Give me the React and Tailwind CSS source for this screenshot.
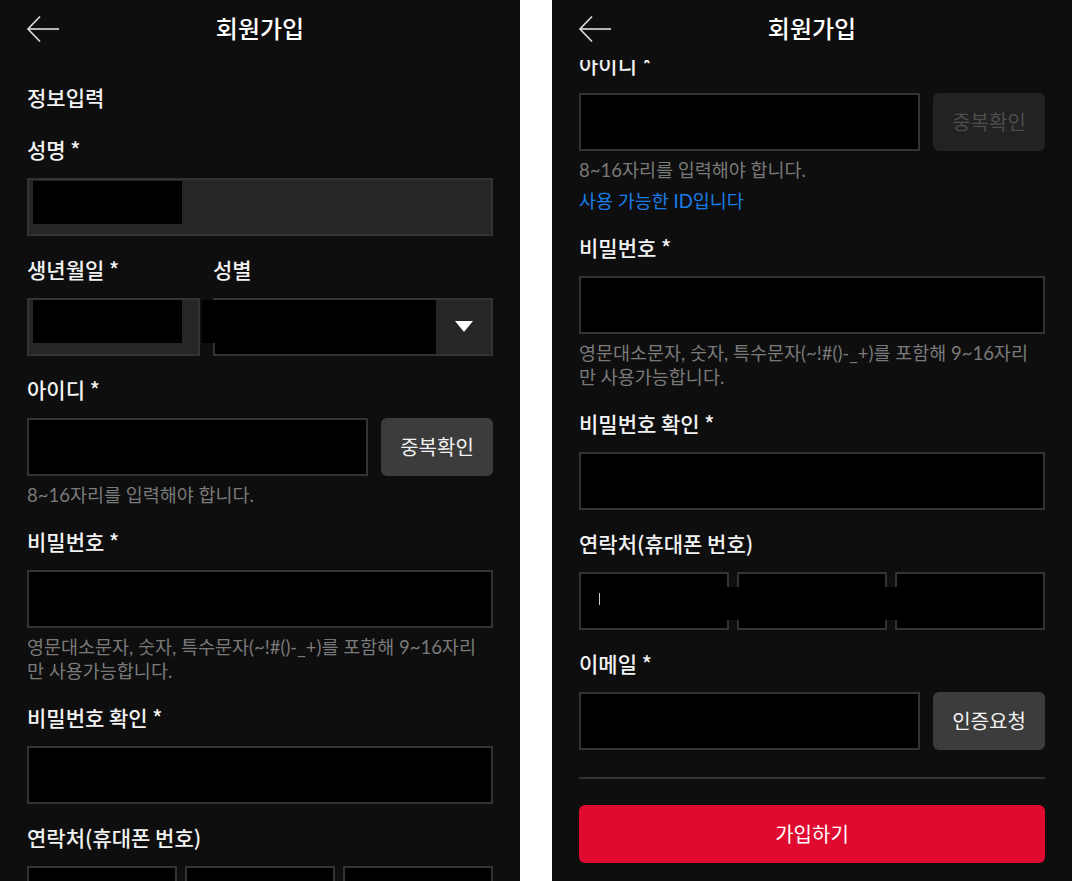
import React from 'react';

const FONT = { fontFamily: "Lato, 'Noto Sans CJK KR', sans-serif" };
const KR = { fontFamily: "'Noto Sans CJK KR', sans-serif" };

function Label({ children, className = '' }) {
  return (
    <div
      className={`text-[21px] leading-[28px] font-medium text-[#f2f2f2] ${className}`}
      style={KR}
    >
      {children}
    </div>
  );
}

function Box({ className = '', children }) {
  return (
    <div className={`relative h-[58px] border-2 border-[#333333] ${className}`}>{children}</div>
  );
}

function Helper({ children, className = '' }) {
  return (
    <p className={`mt-[7px] text-[18.5px] leading-[24px] text-[#7a7a7a] ${className}`}>{children}</p>
  );
}

function SignupForm({ scrolled }) {
  return (
    <div className={`px-[27px] pt-[23px] ${scrolled ? 'mt-[-325px]' : ''}`}>
      <Label className="mb-[24px]">정보입력</Label>

      {/* 성명 */}
      <div className="mb-[19px]">
        <Label className="mb-[15px]">성명 *</Label>
        <Box className="bg-[#262626]">
          <div className="absolute left-[4px] top-[1px] w-[149px] h-[43px] bg-black"></div>
        </Box>
      </div>

      {/* 생년월일 / 성별 */}
      <div className="mb-[19px] flex gap-[13px]">
        <div className="w-[173px]">
          <Label className="mb-[15px]">생년월일 *</Label>
          <Box className="bg-[#262626]">
            <div className="absolute left-[4px] top-0 w-[149px] h-[43px] bg-black"></div>
          </Box>
        </div>
        <div className="flex-1 relative">
          <Label className="mb-[15px]">성별</Label>
          <div className="absolute left-[-11px] top-[45px] w-[14px] h-[43px] bg-black"></div>
          <div className="flex h-[58px] border-2 border-[#333333] bg-black">
            <div className="flex-1"></div>
            <div className="w-[55px] bg-[#262626] flex items-center justify-center">
              <svg width="18" height="12" viewBox="0 0 18 12">
                <polygon points="0,0 18,0 9,11" fill="#ffffff" />
              </svg>
            </div>
          </div>
        </div>
      </div>

      {/* 아이디 */}
      <div className="mb-[20px]">
        <Label className="mb-[15px]">아이디 *</Label>
        <div className="flex gap-[13px]">
          <Box className="flex-1 bg-black" />
          <button
            className={`w-[112px] h-[58px] rounded-[6px] text-[20px] ${
              scrolled ? 'bg-[#222222] text-[#4d4d4d]' : 'bg-[#3c3c3c] text-[#f2f2f2]'
            }`}
            style={KR}
          >
            중복확인
          </button>
        </div>
        <Helper>8~16자리를 입력해야 합니다.</Helper>
        {scrolled && (
          <p className="mt-[7px] text-[18.5px] leading-[24px] text-[#1a7ee8]">사용 가능한 ID입니다</p>
        )}
      </div>

      {/* 비밀번호 */}
      <div className="mb-[20px]">
        <Label className="mb-[15px]">비밀번호 *</Label>
        <Box className="bg-black" />
        <Helper>
          영문대소문자, 숫자, 특수문자(~!#()-_+)를 포함해 9~16자리
          <br />만 사용가능합니다.
        </Helper>
      </div>

      {/* 비밀번호 확인 */}
      <div className="mb-[19px]">
        <Label className="mb-[15px]">비밀번호 확인 *</Label>
        <Box className="bg-black" />
      </div>

      {/* 연락처 */}
      <div className="mb-[19px]">
        <Label className="mb-[15px]">연락처(휴대폰 번호)</Label>
        <div className="relative flex gap-[8px]">
          <Box className="flex-1 bg-black">
            {scrolled && <div className="absolute left-[18px] top-[19px] w-[1px] h-[12px] bg-[#cccccc]"></div>}
          </Box>
          <Box className="flex-1 bg-black" />
          <Box className="flex-1 bg-black" />
          {scrolled && (
            <>
              <div className="absolute left-[148px] top-[15px] w-[12px] h-[33px] bg-black"></div>
              <div className="absolute left-[306px] top-[15px] w-[12px] h-[33px] bg-black"></div>
            </>
          )}
        </div>
      </div>

      {/* 이메일 */}
      <div>
        <Label className="mb-[15px]">이메일 *</Label>
        <div className="flex gap-[13px]">
          <Box className="flex-1 bg-black" />
          <button
            className="w-[112px] h-[58px] rounded-[6px] bg-[#3c3c3c] text-[20px] text-[#f2f2f2]"
            style={KR}
          >
            인증요청
          </button>
        </div>
      </div>

      <div className="mt-[27px] h-[2px] bg-[#333333]"></div>

      <button
        className="mt-[26px] w-full h-[58px] rounded-[6px] bg-[#e00a30] text-[20px] text-white"
        style={KR}
      >
        가입하기
      </button>
    </div>
  );
}

function Screen({ scrolled }) {
  return (
    <div className="w-[520px] h-[881px] bg-[#0e0e0e] flex flex-col overflow-hidden">
      <header className="relative h-[60px] shrink-0 flex items-center justify-center pb-[4px]">
        <svg
          className="absolute left-[26px] top-[15px]"
          width="34"
          height="28"
          viewBox="0 0 34 28"
          fill="none"
          stroke="#e0e0e0"
          strokeWidth="1.6"
        >
          <line x1="2" y1="14" x2="33" y2="14" />
          <polyline points="14,1.5 2,14 14,26.5" />
        </svg>
        <h1 className="text-[24px] font-medium text-white" style={KR}>
          회원가입
        </h1>
      </header>
      <div className="flex-1 overflow-hidden">
        <SignupForm scrolled={scrolled} />
      </div>
    </div>
  );
}

export default function App() {
  return (
    <div className="w-[1072px] h-[881px] bg-white flex gap-[32px]" style={FONT}>
      <Screen scrolled={false} />
      <Screen scrolled={true} />
    </div>
  );
}
